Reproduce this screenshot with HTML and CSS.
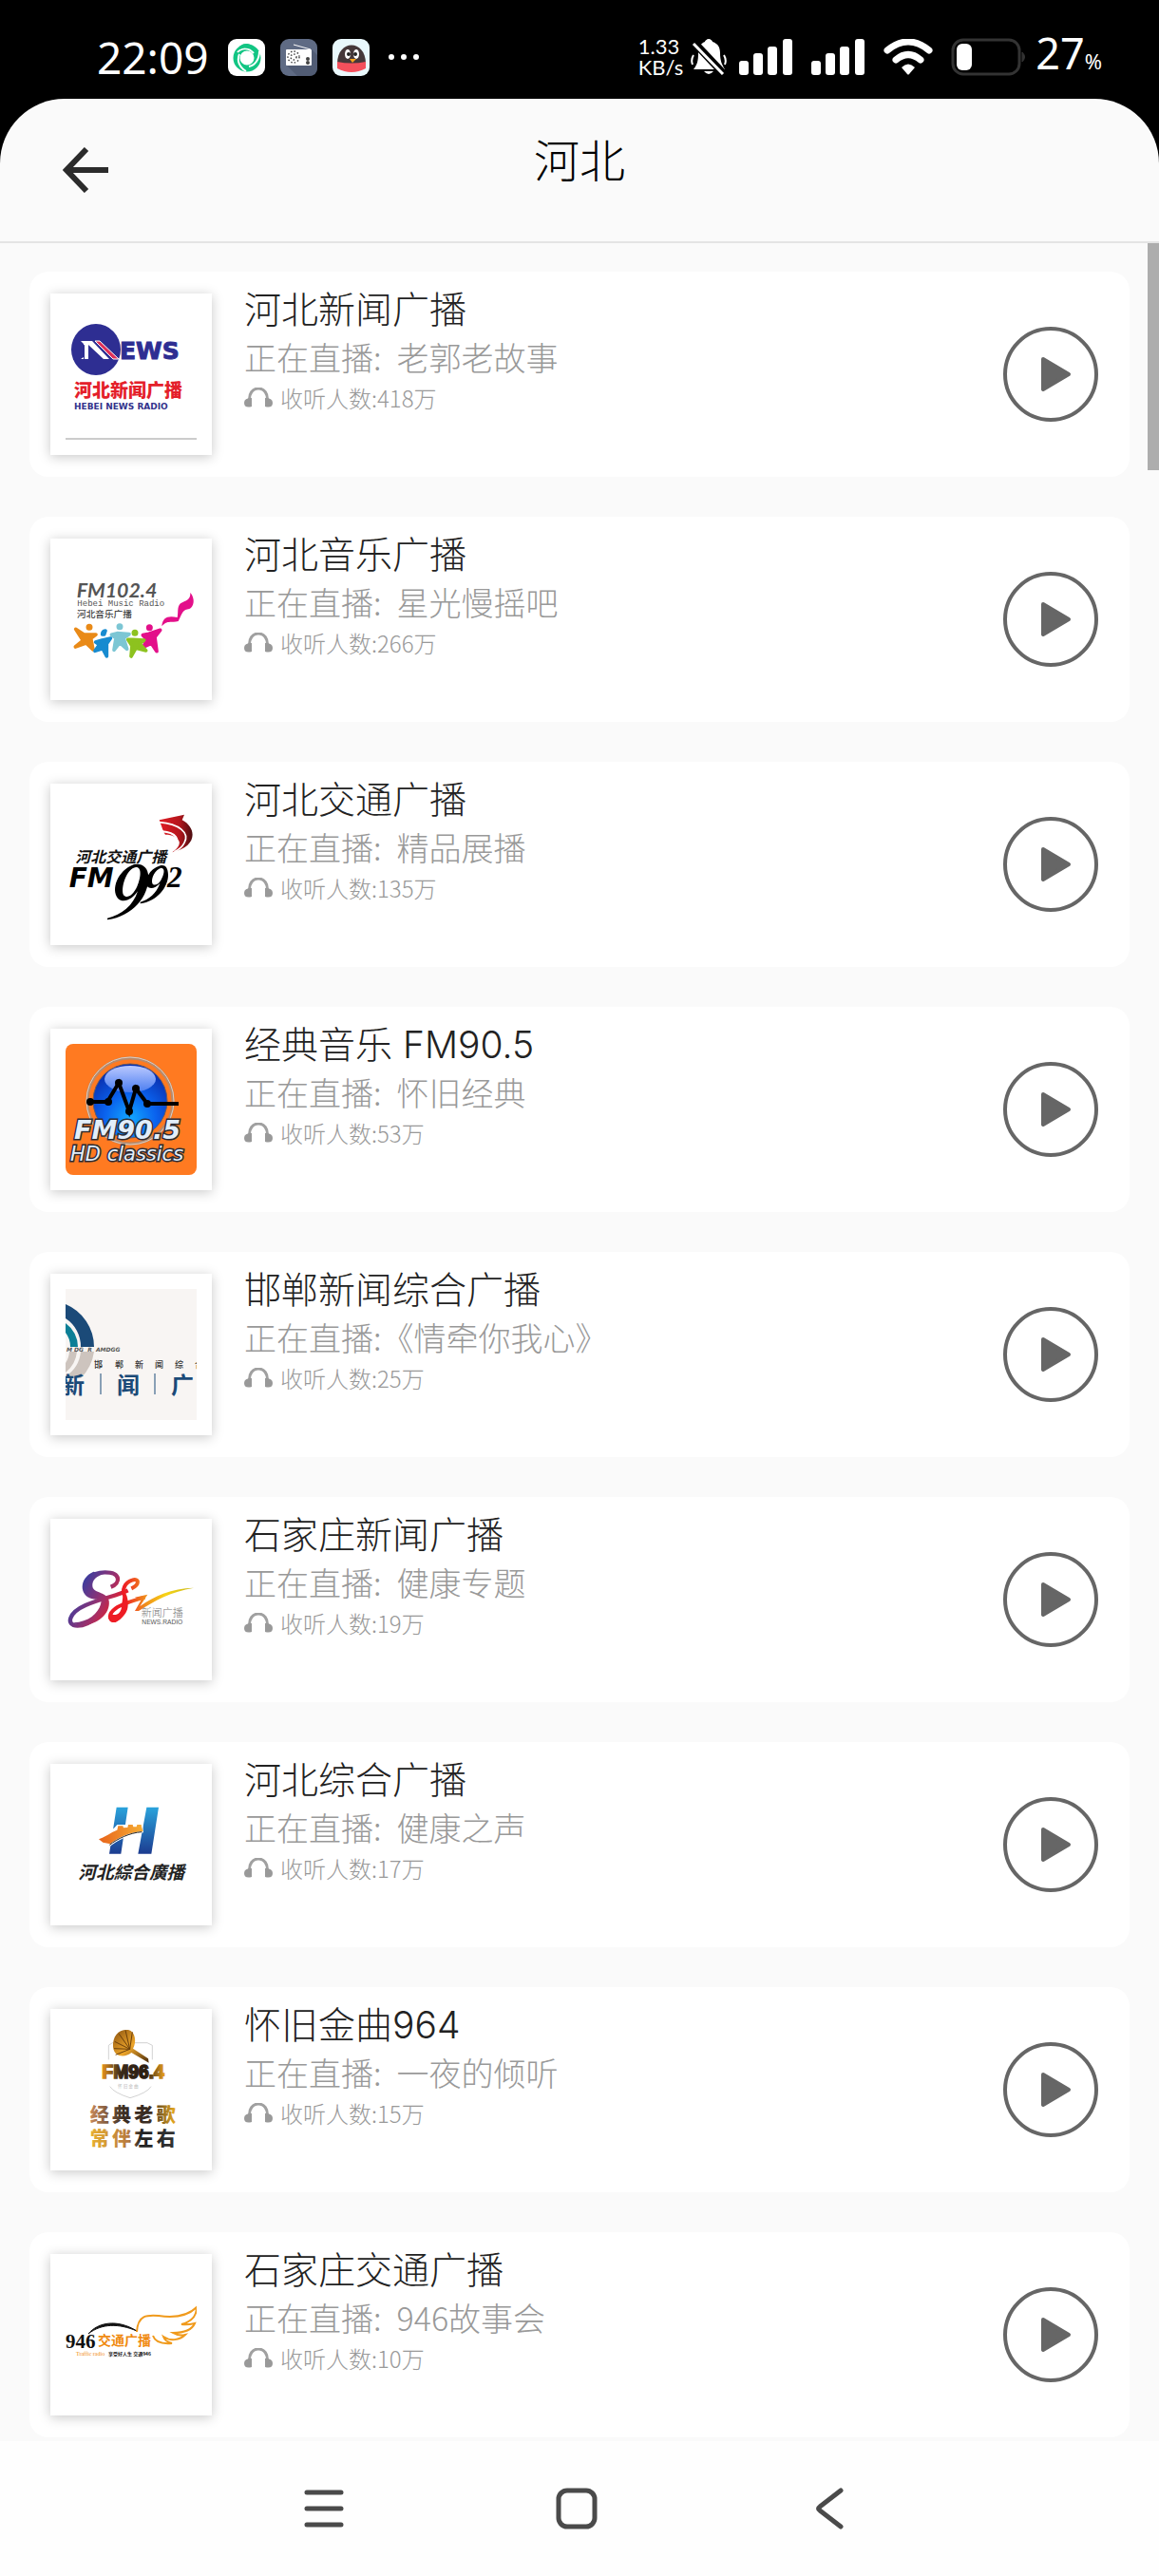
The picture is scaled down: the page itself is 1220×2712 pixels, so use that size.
FILE: index.html
```html
<!DOCTYPE html>
<html lang="zh-CN">
<head>
<meta charset="utf-8">
<meta name="viewport" content="width=device-width, initial-scale=1">
<title>河北</title>
<link rel="stylesheet" href="styles.css">
</head>
<body>
<svg class="defs" aria-hidden="true">
  <symbol id="play" viewBox="0 0 100 100">
    <circle cx="50" cy="50" r="48" fill="none" stroke="#666" stroke-width="4"/>
    <path d="M42 34 L69 50 L42 66 Z" fill="#666" stroke="#666" stroke-width="4" stroke-linejoin="round"/>
  </symbol>
  <symbol id="phones" viewBox="0 0 30 22">
    <path d="M6 16 C2 -4 28 -4 24 16" fill="none" stroke="#a0a0a0" stroke-width="3"/>
    <path d="M8 11 V20 Q0 22 0 16 Q0 11 8 11 Z M22 11 V20 Q30 22 30 16 Q30 11 22 11 Z" fill="#999"/>
  </symbol>
  <symbol id="signal" viewBox="0 0 56 38">
    <rect x="0" y="23" width="10" height="15" rx="3"/>
    <rect x="15" y="15" width="10" height="23" rx="3"/>
    <rect x="30" y="8" width="10" height="30" rx="3"/>
    <rect x="46" y="0" width="10" height="38" rx="3"/>
  </symbol>
</svg>

<header class="status">
  <div class="status-left">
    <span class="clock">22:09</span>
    <svg class="app" viewBox="0 0 39 39" aria-hidden="true">
      <rect width="39" height="39" rx="9" fill="#fff"/>
      <circle cx="20" cy="20" r="11" fill="none" stroke="#12c583" stroke-width="7"/>
      <path d="M10 14 C14 9 22 9 27 15 M33 13 C33 22 28 28 22 29 M19 34 C12 30 9 23 12 16" fill="none" stroke="#fff" stroke-width="2"/>
      <path d="M10 12 C12 3 25 3 28 11 C22 8 16 9 10 12 Z" fill="#12c583"/>
    </svg>
    <svg class="app" viewBox="0 0 39 39" aria-hidden="true">
      <rect width="39" height="39" rx="9" fill="#5f6b84"/>
      <path d="M7 28 L18 39 H30 Q39 39 39 30 V17 L33 11 Z" fill="#515c74"/>
      <path d="M14 6 L32 11" stroke="#fff" stroke-width="1"/>
      <rect x="6" y="11" width="27" height="17" rx="1" fill="#fff"/>
      <circle cx="14" cy="19" r="6" fill="none" stroke="#444" stroke-width="1.500" stroke-dasharray="1.500 2"/>
      <circle cx="14" cy="19" r="3" fill="none" stroke="#444" stroke-width="1.500" stroke-dasharray="1.500 2"/>
      <circle cx="29" cy="21" r="2" fill="#444"/><circle cx="29" cy="25" r="2" fill="#444"/>
    </svg>
    <svg class="app" viewBox="0 0 39 39" aria-hidden="true">
      <rect width="39" height="39" rx="9" fill="#e9f8fc"/>
      <path d="M5 26 C5 0 35 0 35 26 Z" fill="#45383a"/>
      <path d="M5 24 Q20 27 35 24 V31 Q20 39 5 31 Z" fill="#f4505c"/>
      <ellipse cx="16" cy="16" rx="3" ry="5" fill="#fff"/><ellipse cx="25" cy="16" rx="3" ry="5" fill="#fff"/>
      <circle cx="17" cy="16" r="2" fill="#222"/><circle cx="24" cy="16" r="2" fill="#222"/>
      <path d="M18 21 H25 L21 25 Z" fill="#f6a21c"/>
    </svg>
    <svg class="more" viewBox="0 0 34 8" fill="#fff" aria-hidden="true"><circle cx="4" cy="4" r="3"/><circle cx="17" cy="4" r="3"/><circle cx="30" cy="4" r="3"/></svg>
  </div>
  <div class="status-right">
    <div class="speed"><span>1.33</span><span>KB/s</span></div>
    <svg class="bell" viewBox="0 0 38 38" fill="#fff" aria-hidden="true">
      <path d="M19 0 C21 0 23 2 23 3 C29 5 31 9 31 15 C31 23 33 27 36 32 H3 C7 27 8 23 8 15 C8 9 10 5 15 3 C15 2 17 0 19 0 Z"/>
      <path d="M14 34 H24 Q19 40 14 34 Z"/>
      <path d="M3 17 Q0 22 2 27 M35 17 Q38 22 36 27" stroke="#fff" stroke-width="2" fill="none"/>
      <path d="M3 3 L35 37" stroke="#000" stroke-width="8"/>
      <path d="M3 5 L34 37" stroke="#fff" stroke-width="3"/>
    </svg>
    <svg class="signal" fill="#fff" aria-hidden="true"><use href="#signal"/></svg>
    <svg class="signal" fill="#fff" aria-hidden="true"><use href="#signal"/></svg>
    <svg class="wifi" viewBox="0 0 52 38" aria-hidden="true">
      <path d="M4 12 Q26 -6 48 12 M13 22 Q26 11 39 22" fill="none" stroke="#fff" stroke-width="7" stroke-linecap="round"/>
      <path d="M19 30 Q26 23 33 30 L27 37 Q26 38 25 37 Z" fill="#fff"/>
    </svg>
    <svg class="battery" viewBox="0 0 80 40" aria-hidden="true">
      <rect x="2" y="2" width="70" height="36" rx="11" fill="none" stroke="#333" stroke-width="3"/>
      <path d="M75 15 Q80 20 75 25 Z" fill="#333" stroke="#333"/>
      <rect x="6" y="6" width="16" height="28" rx="6" fill="#fff"/>
    </svg>
    <span class="percent">27<small>%</small></span>
  </div>
</header>

<main class="screen">
  <div class="topbar">
    <button class="back" type="button" aria-label="返回">
      <svg viewBox="0 0 48 48" aria-hidden="true"><path d="M25 2 L4 24 L25 46 M4 24 H48" fill="none" stroke="#2b2b2b" stroke-width="6"/></svg>
    </button>
    <h1>河北</h1>
  </div>

  <div class="content">
  <ul class="stations">
    <li class="card">
      <div class="thumb"><svg viewBox="0 0 138 138" role="img" aria-label="河北新闻广播">
        <ellipse cx="32" cy="43" rx="26" ry="27" fill="#2e2e92"/>
        <path d="M16 34 H28 L46 53 H40 L24 38 V53 H16 L19 51 V37 Z" fill="#fff"/>
        <path d="M23 39 V53 H19 V38 Z" fill="#2e2e92"/>
        <path d="M20 36 V53 H24 V36 Z" fill="#fff"/>
        <path d="M31 34 H36 L56 53 H50 Z" fill="#e0325a" stroke="#fff"/>
        <text x="57" y="53" font-family="DejaVu Sans" font-weight="700" font-size="25" fill="#2e2e92" stroke="#2e2e92">EWS</text>
        <text class="cjk" x="9" y="93" font-weight="900" font-size="19" fill="#e4202a">河北新闻广播</text>
        <text x="9" y="106" font-family="DejaVu Sans" font-weight="700" font-size="9" fill="#33338c">HEBEI NEWS RADIO</text>
        <path d="M0 137 H138" stroke="#999"/>
      </svg></div>
      <div class="info"><h2>河北新闻广播</h2><p class="live"><span>正在直播:</span><span>老郭老故事</span></p><p class="count"><svg aria-hidden="true"><use href="#phones"/></svg>收听人数:418万</p></div>
      <button class="play" type="button" aria-label="播放河北新闻广播"><svg aria-hidden="true"><use href="#play"/></svg></button>
    </li>

    <li class="card">
      <div class="thumb"><svg viewBox="87 99 414 414" role="img" aria-label="河北音乐广播">
        <text x="122" y="238" font-family="Lato" font-style="italic" font-weight="700" font-size="64" fill="#555">FM102.4</text>
        <text x="124" y="265" font-family="Liberation Mono" font-size="27" fill="#555">Hebei Music Radio</text>
        <text class="cjk" x="123" y="299" font-weight="500" font-size="29" fill="#444">河北音乐广播</text>
        <g fill="none" stroke-width="11" stroke-linecap="round" stroke-linejoin="round">
          <g stroke="#e98a18" fill="#e98a18"><circle cx="162" cy="331" r="5"/><path d="M119 337 L145 354 L183 354 L167 366 L174 402 L152 381 L118 393 L142 373 Z"/></g>
          <g stroke="#7cc6d4" fill="#7cc6d4"><circle cx="258" cy="329" r="5"/><path d="M232 355 L250 350 L288 353 L270 365 L281 400 L258 380 L240 403 L246 365 Z"/></g>
          <g stroke="#e3108a" fill="#e3108a"><circle cx="352" cy="332" r="5"/><path d="M331 356 L350 352 L386 340 L369 362 L375 407 L358 382 L333 393 L344 370 Z"/></g>
          <g stroke="#178bd0" fill="#178bd0"><path d="M203 354 Q203 343 213 342 L209 354 Z"/><path d="M182 378 L202 372 L229 366 L217 383 L217 423 L204 398 L180 406 L194 386 Z"/></g>
          <g stroke="#8dc21f" fill="#8dc21f"><circle cx="306" cy="349" r="5"/><path d="M284 370 L302 370 L335 372 L321 383 L341 405 L309 397 L294 423 L297 390 Z"/></g>
        </g>
        <path d="M391 328 C393 298 412 294 440 300 C444 285 438 268 450 256 C466 246 482 246 481 222 C497 240 493 267 478 273 C458 275 456 285 443 312 C425 318 408 306 391 328 Z" fill="#e3108a"/>
      </svg></div>
      <div class="info"><h2>河北音乐广播</h2><p class="live"><span>正在直播:</span><span>星光慢摇吧</span></p><p class="count"><svg aria-hidden="true"><use href="#phones"/></svg>收听人数:266万</p></div>
      <button class="play" type="button" aria-label="播放河北音乐广播"><svg aria-hidden="true"><use href="#play"/></svg></button>
    </li>

    <li class="card">
      <div class="thumb"><svg viewBox="87 93 414 414" role="img" aria-label="河北交通广播">
        <defs><linearGradient id="g3" x1="0" x2="1"><stop offset="0" stop-color="#e01c24"/><stop offset=".6" stop-color="#b5161c"/><stop offset="1" stop-color="#4a0d10"/></linearGradient></defs>
        <path d="M383 160 L462 143 L455 160 C503 185 503 245 424 262 C440 250 448 240 446 228 C440 214 425 206 402 206 C396 198 390 180 383 160 Z" fill="url(#g3)"/>
        <path d="M383 167 C445 172 480 200 462 232 C455 246 445 254 430 260" fill="none" stroke="#fff" stroke-width="5"/>
        <path d="M392 196 C435 200 452 220 430 250" fill="none" stroke="#fff" stroke-width="6"/>
        <text class="cjk" x="118" y="293" font-style="italic" font-weight="700" font-size="48" fill="#111">河北交通广播</text>
        <text x="98" y="371" font-family="DejaVu Sans" font-style="italic" font-weight="700" font-size="84" fill="#000">FM</text>
        <text x="408" y="371" font-family="Liberation Serif" font-weight="700" font-size="94" fill="#000" font-style="italic">2</text>
        <path fill-rule="evenodd" d="M303 300 C250 320 230 380 252 407 C270 425 298 410 315 385 C300 430 265 460 219 470 V475 C300 465 350 400 349 340 C348 310 330 296 303 300 Z M309 309 C328 308 326 340 313 370 C300 398 281 410 270 397 C260 375 280 312 309 309 Z"/>
        <path fill-rule="evenodd" d="M386 304 C350 315 335 350 345 370 C355 380 372 374 385 360 C375 390 350 412 323 419 V424 C375 417 412 372 411 332 C410 308 400 300 386 304 Z M389 311 C402 312 399 330 388 350 C378 366 365 368 361 360 C356 345 370 315 389 311 Z"/>
      </svg></div>
      <div class="info"><h2>河北交通广播</h2><p class="live"><span>正在直播:</span><span>精品展播</span></p><p class="count"><svg aria-hidden="true"><use href="#phones"/></svg>收听人数:135万</p></div>
      <button class="play" type="button" aria-label="播放河北交通广播"><svg aria-hidden="true"><use href="#play"/></svg></button>
    </li>

    <li class="card">
      <div class="thumb"><svg viewBox="0 0 138 138" role="img" aria-label="经典音乐 FM90.5">
        <defs>
          <radialGradient id="g4" cx=".5" cy=".75" r=".7"><stop offset="0" stop-color="#12a8ff"/><stop offset=".5" stop-color="#0a62ee"/><stop offset="1" stop-color="#0a2fae"/></radialGradient>
          <linearGradient id="g4b" x2="0" y2="1"><stop offset="0" stop-color="#b9c8ff"/><stop offset="1" stop-color="#4a7df0"/></linearGradient>
        </defs>
        <rect width="138" height="138" rx="8" fill="#ff7a21"/>
        <circle cx="68" cy="60" r="45" fill="none" stroke="#b98a6a" stroke-width="3"/>
        <circle cx="68" cy="60" r="46" fill="none" stroke="#d9cfc8" stroke-width="1"/>
        <circle cx="68" cy="60" r="39" fill="url(#g4)" stroke="#6a5a60"/>
        <ellipse cx="68" cy="37" rx="27" ry="14" fill="url(#g4b)"/>
        <path d="M26 61 H44 L56 41 L67 71 L74 47 L86 63 H119" fill="none" stroke="#000" stroke-width="4"/>
        <g fill="#000"><circle cx="26" cy="61" r="4"/><circle cx="45" cy="61" r="4"/><circle cx="56" cy="41" r="4"/><circle cx="67" cy="71" r="4"/><circle cx="74" cy="47" r="4"/><circle cx="86" cy="63" r="4"/></g>
        <g font-family="DejaVu Sans" font-style="italic" fill="#e2eefa" stroke="#2b2b35" stroke-width="3" paint-order="stroke">
          <text x="9" y="100" font-weight="700" font-size="27">FM90.5</text>
          <text x="5" y="123" font-size="21">HD classics</text>
        </g>
      </svg></div>
      <div class="info"><h2>经典音乐 FM90.5</h2><p class="live"><span>正在直播:</span><span>怀旧经典</span></p><p class="count"><svg aria-hidden="true"><use href="#phones"/></svg>收听人数:53万</p></div>
      <button class="play" type="button" aria-label="播放经典音乐 FM90.5"><svg aria-hidden="true"><use href="#play"/></svg></button>
    </li>

    <li class="card">
      <div class="thumb"><svg viewBox="0 0 138 138" role="img" aria-label="邯郸新闻综合广播">
        <rect width="138" height="138" fill="#f8f5f3"/>
        <path d="M0 16 A49 49 0 0 1 30 61 H16 A35 35 0 0 0 0 31 Z" fill="#1b4a78"/>
        <path d="M0 36 A32 32 0 0 1 13 61 H5 A24 24 0 0 0 0 46 Z" fill="#0c7f96"/>
        <path d="M30 66 A49 49 0 0 1 16 94 H0 V92 A35 35 0 0 0 16 66 Z M12 66 A32 32 0 0 1 0 88 V78 A24 24 0 0 0 4 66 Z" fill="#cdc4be"/>
        <text x="1" y="66" font-family="DejaVu Sans" font-style="italic" font-weight="700" font-size="6" fill="#555">M DG&#160; R&#160; AMDGG</text>
        <text class="cjk" x="30 52 73 94 115 136" y="83" font-weight="500" font-size="9" fill="#333">邯郸新闻综合</text>
        <text class="cjk" x="-4 54 111" y="110" font-weight="700" font-size="24" fill="#1b4a78">新闻广</text>
        <path d="M37 89 V111 M94 89 V111" stroke="#1b4a78"/>
      </svg></div>
      <div class="info"><h2>邯郸新闻综合广播</h2><p class="live">正在直播:《情牵你我心》</p><p class="count"><svg aria-hidden="true"><use href="#phones"/></svg>收听人数:25万</p></div>
      <button class="play" type="button" aria-label="播放邯郸新闻综合广播"><svg aria-hidden="true"><use href="#play"/></svg></button>
    </li>

    <li class="card">
      <div class="thumb"><svg viewBox="87 90 414 414" role="img" aria-label="石家庄新闻广播">
        <defs>
          <linearGradient id="g6" gradientUnits="userSpaceOnUse" x1="130" y1="230" x2="300" y2="330"><stop offset="0" stop-color="#2b3fa8"/><stop offset=".5" stop-color="#a0306a"/><stop offset=".8" stop-color="#ee1c24"/></linearGradient>
          <linearGradient id="g6b" gradientUnits="userSpaceOnUse" x1="270" y1="0" x2="492" y2="0"><stop offset="0" stop-color="#ee1c24"/><stop offset=".3" stop-color="#f08a1c"/><stop offset=".6" stop-color="#f7d417"/><stop offset="1" stop-color="#c9b81a"/></linearGradient>
        </defs>
        <path d="M230 257 C262 245 262 211 212 211 C165 211 142 240 152 266 C162 292 205 275 213 300 C217 335 165 380 125 380 C85 378 98 338 150 315 C200 293 250 285 284 268" fill="none" stroke="url(#g6)" stroke-width="13"/>
        <path d="M175 209 C128 230 130 285 172 295 C200 301 203 290 198 312 C190 340 160 368 112 370 C155 395 232 355 224 300 C212 268 176 280 172 255 C170 235 185 222 210 215 Z" fill="url(#g6)"/>
        <path d="M295 262 C322 250 320 228 297 236 C275 243 263 265 275 288 C285 315 262 358 242 362 C222 364 222 342 245 325 C265 310 300 300 338 290" fill="none" stroke="url(#g6b)" stroke-width="12"/>
        <path d="M270 270 C296 315 285 345 245 369 C222 372 218 352 229 338 C238 352 262 345 264 320 Z" fill="#ee1c24"/>
        <path d="M306 290 L346 281 L322 318 C370 285 420 262 492 260 C420 272 370 300 318 333 H306 L326 298 Z" fill="url(#g6b)"/>
        <text class="cjk" x="326" y="352" font-size="33" fill="#777">新闻广播</text>
        <text x="328" y="374" font-family="Liberation Sans" font-size="20" fill="#555">NEWS.RADIO</text>
      </svg></div>
      <div class="info"><h2>石家庄新闻广播</h2><p class="live"><span>正在直播:</span><span>健康专题</span></p><p class="count"><svg aria-hidden="true"><use href="#phones"/></svg>收听人数:19万</p></div>
      <button class="play" type="button" aria-label="播放石家庄新闻广播"><svg aria-hidden="true"><use href="#play"/></svg></button>
    </li>

    <li class="card">
      <div class="thumb"><svg viewBox="87 99 414 414" role="img" aria-label="河北综合广播">
        <defs>
          <linearGradient id="g7" x2="0" y2="1"><stop offset="0" stop-color="#2aa3dc"/><stop offset="1" stop-color="#1c3c90"/></linearGradient>
          <linearGradient id="g7b" x2="1" y2="0"><stop offset="0" stop-color="#e8641b"/><stop offset="1" stop-color="#f6ae35"/></linearGradient>
        </defs>
        <path d="M248 188 H284 L262 335 H225 Z M343 188 H381 L358 335 H316 Z" fill="url(#g7)"/>
        <path d="M190 285 C225 270 240 255 250 243 H330 L333 268 C290 270 250 295 226 312 Z" fill="#fff"/>
        <path d="M192 289 C225 275 240 262 250 260 L253 247 H268 L270 253 L283 252 L285 243 H299 L301 250 H311 L313 243 H326 L327 250 L332 264 C290 266 250 285 228 304 L205 299 Z" fill="url(#g7b)"/>
        <path d="M226 307 C250 288 290 268 328 266" fill="none" stroke="#222" stroke-width="3"/>
        <text class="cjk" x="127" y="413" font-style="italic" font-weight="700" font-size="56" fill="#222">河北綜合廣播</text>
      </svg></div>
      <div class="info"><h2>河北综合广播</h2><p class="live"><span>正在直播:</span><span>健康之声</span></p><p class="count"><svg aria-hidden="true"><use href="#phones"/></svg>收听人数:17万</p></div>
      <button class="play" type="button" aria-label="播放河北综合广播"><svg aria-hidden="true"><use href="#play"/></svg></button>
    </li>

    <li class="card">
      <div class="thumb"><svg viewBox="87 93 414 414" role="img" aria-label="怀旧金曲964">
        <defs>
          <linearGradient id="g8"><stop offset="0" stop-color="#e8941c"/><stop offset=".3" stop-color="#3a2a18"/><stop offset=".7" stop-color="#2a1d12"/><stop offset="1" stop-color="#e8a020"/></linearGradient>
          <linearGradient id="g8b"><stop offset="0" stop-color="#c98a5a"/><stop offset=".4" stop-color="#3a2c22"/><stop offset=".7" stop-color="#3a2c22"/><stop offset="1" stop-color="#f0b020"/></linearGradient>
          <linearGradient id="g8c"><stop offset="0" stop-color="#e8b030"/><stop offset=".45" stop-color="#b87a40"/><stop offset=".6" stop-color="#222"/><stop offset="1" stop-color="#333"/></linearGradient>
          <linearGradient id="g8d" y2="1"><stop offset="0" stop-color="#8a5210"/><stop offset=".5" stop-color="#eda52a"/><stop offset="1" stop-color="#4a2c0c"/></linearGradient>
        </defs>
        <path d="M223 205 V160 L235 152 H345 L361 160 V205 M227 290 Q240 310 291 326 Q345 310 357 290" fill="none" stroke="#bbb" stroke-width="2"/>
        <path d="M237 165 C235 130 255 108 285 111 C308 116 312 150 300 170 L348 202 L350 215 L295 183 C275 200 240 198 237 165 Z" fill="url(#g8d)"/>
        <path d="M290 172 L245 190 M290 172 L240 170 M290 172 L242 148 M290 172 L256 124 M290 172 L276 112 M290 172 L298 118" stroke="#6a3f0c" stroke-width="3"/>
        <text x="202" y="265" font-family="Liberation Sans Narrow, Liberation Sans" font-weight="700" font-size="58" fill="url(#g8)" stroke="url(#g8)" stroke-width="5">FM96.4</text>
        <text class="cjk" x="252" y="294" font-size="14" fill="#999">怀 旧 金 曲</text>
        <text class="cjk" x="164 234 304 374" y="401" font-weight="900" font-size="60" fill="url(#g8b)">经典老歌</text>
        <text class="cjk" x="164 234 304 374" y="477" font-weight="900" font-size="60" fill="url(#g8c)">常伴左右</text>
      </svg></div>
      <div class="info"><h2>怀旧金曲964</h2><p class="live"><span>正在直播:</span><span>一夜的倾听</span></p><p class="count"><svg aria-hidden="true"><use href="#phones"/></svg>收听人数:15万</p></div>
      <button class="play" type="button" aria-label="播放怀旧金曲964"><svg aria-hidden="true"><use href="#play"/></svg></button>
    </li>

    <li class="card">
      <div class="thumb"><svg viewBox="0 0 138 138" role="img" aria-label="石家庄交通广播">
        <path d="M24 68 C34 56 54 52 75 65 C56 57 38 57 24 68 Z" fill="#111" stroke="#111"/>
        <path d="M75 66 C76 48 86 48 98 49 C112 51 128 50 138 40 C138 48 134 55 122 58 C128 59 132 58 136 57 C133 64 124 67 113 67 C118 70 122 70 126 69 C120 75 110 76 103 71 C104 74 108 77 112 78 C101 79 94 76 92 70" fill="none" stroke="#f09a1c" stroke-width="2"/>
        <text x="0" y="83" font-family="Liberation Serif" font-weight="700" font-size="21" fill="#111">946</text>
        <text class="cjk" x="34" y="80" font-weight="700" font-size="14" fill="#f08a10">交通广播</text>
        <text x="11" y="91" font-family="Liberation Serif" font-size="6" fill="#f08a10">Traffic radio</text>
        <text class="cjk" x="45" y="91" font-weight="700" font-size="5" fill="#111">享受好人生 交通946</text>
      </svg></div>
      <div class="info"><h2>石家庄交通广播</h2><p class="live"><span>正在直播:</span><span>946故事会</span></p><p class="count"><svg aria-hidden="true"><use href="#phones"/></svg>收听人数:10万</p></div>
      <button class="play" type="button" aria-label="播放石家庄交通广播"><svg aria-hidden="true"><use href="#play"/></svg></button>
    </li>
  </ul>
  <div class="scrollbar"></div>
  </div>
</main>

<nav class="sysnav" aria-label="系统导航">
  <button type="button" aria-label="最近任务"><svg viewBox="0 0 44 44" aria-hidden="true"><path d="M4 5 H40 M4 22 H40 M4 39 H40" stroke="#4a4a4a" stroke-width="5" stroke-linecap="round"/></svg></button>
  <button type="button" aria-label="主屏幕"><svg viewBox="0 0 44 44" aria-hidden="true"><rect x="3" y="3" width="38" height="38" rx="9" fill="none" stroke="#4a4a4a" stroke-width="5"/></svg></button>
  <button type="button" aria-label="返回"><svg viewBox="0 0 44 44" aria-hidden="true"><path d="M34 3 L12 20 Q9 22 12 24 L34 41" fill="none" stroke="#4a4a4a" stroke-width="5" stroke-linecap="round"/></svg></button>
</nav>
</body>
</html>
```
FILE: styles.css
```css
* { box-sizing: border-box; }

body {
  margin: 0;
  min-height: 100vh;
  display: flex;
  flex-direction: column;
  background: #000;
  font-family: "Noto Sans CJK SC", "Noto Sans", sans-serif;
  font-weight: 300;
}

h1, h2, p, ul { margin: 0; padding: 0; }
ul { list-style: none; }
svg { display: block; }

button {
  padding: 0;
  border: 0;
  background: none;
  cursor: pointer;
}

.defs { position: absolute; width: 0; height: 0; }
.cjk { font-family: "Noto Sans CJK SC", sans-serif; }

/* Phone status bar */
.status {
  display: flex;
  justify-content: space-between;
  align-items: center;
  height: 104px;
  padding: 16px 60px 0 102px;
  color: #fff;
  font-family: "Noto Sans", sans-serif;
  font-weight: 400;
}
.status-left, .status-right { display: flex; align-items: center; }
.clock { margin-right: 20px; font-size: 46px; line-height: 46px; }
.app { width: 39px; height: 39px; margin-right: 16px; }
.more { width: 34px; height: 8px; margin-left: 3px; }
.speed {
  display: flex;
  flex-direction: column;
  margin-right: 8px;
  font-family: Lato, sans-serif;
  font-size: 22px;
  line-height: 22px;
}
.bell { width: 38px; height: 38px; margin-right: 13px; }
.signal { width: 56px; height: 38px; margin-right: 20px; }
.wifi { width: 52px; height: 38px; margin-right: 19px; }
.battery { width: 80px; height: 40px; margin-right: 9px; }
.percent { font-size: 45px; line-height: 46px; }
.percent small { font-size: 22px; }

/* App window */
.screen {
  flex: 1;
  display: flex;
  flex-direction: column;
  overflow: hidden;
  background: #fafafa;
  border-radius: 68px 68px 0 0;
}
.topbar {
  display: grid;
  grid-template-columns: 48px 1fr 48px;
  height: 152px;
  padding: 0 66px;
  border-bottom: 2px solid #e4e4e4;
}
.back { height: 48px; margin-top: 51px; }
.back svg { width: 48px; height: 48px; }
.topbar h1 {
  font-size: 48px;
  font-weight: 300;
  line-height: 124px;
  text-align: center;
  color: #000;
}

.content { position: relative; flex: 1; }
.scrollbar {
  position: absolute;
  top: 0;
  right: 0;
  width: 12px;
  height: 239px;
  background: #adadad;
}

/* Station list */
.stations {
  display: flex;
  flex-direction: column;
  gap: 42px;
  padding: 30px 31px 4px;
}
.card {
  display: flex;
  padding: 16px 33px 16px 22px;
  background: #fff;
  border-radius: 20px;
}
.thumb {
  flex: none;
  width: 170px;
  height: 170px;
  margin: 7px 34px 7px 0;
  padding: 16px;
  background: #fff;
  box-shadow: 0 2px 12px rgba(0, 0, 0, .22);
}
.thumb svg { width: 138px; height: 138px; }
.info { flex: 1; min-width: 0; }
.info h2 {
  font-family: Inter, "Noto Sans CJK SC", sans-serif;
  font-size: 39px;
  font-weight: 300;
  line-height: 48px;
  color: #222;
}
.live {
  display: flex;
  gap: 16px;
  font-size: 34px;
  line-height: 52px;
  color: #999;
}
.count {
  display: flex;
  align-items: center;
  gap: 8px;
  font-size: 24px;
  line-height: 34px;
  color: #999;
}
.count svg { width: 30px; height: 22px; }
.play { flex: none; align-self: center; width: 100px; height: 100px; }
.play svg { width: 100px; height: 100px; }

/* System navigation */
.sysnav {
  display: flex;
  justify-content: center;
  align-items: center;
  gap: 222px;
  height: 142px;
  padding-right: 6px;
  background: #fefefe;
}
.sysnav svg { width: 44px; height: 44px; }
```
